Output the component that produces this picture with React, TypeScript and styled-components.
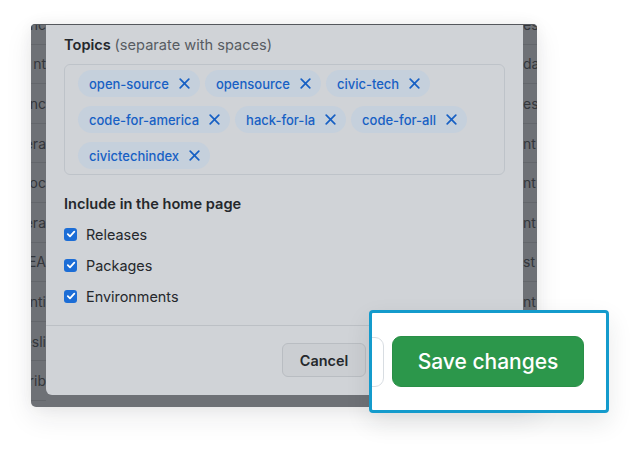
import React from "react";
import styled, { createGlobalStyle } from "styled-components";

const GlobalStyle = createGlobalStyle`
  html, body { margin: 0; padding: 0; background: #ffffff; }
  body { font-family: Inter, "Liberation Sans", Arial, sans-serif; -webkit-font-smoothing: antialiased; }
  * { box-sizing: border-box; }
`;

const Stage = styled.div`
  position: relative;
  width: 640px;
  height: 450px;
  overflow: hidden;
  padding: 24px 0 0 31px;
`;

const Shot = styled.div`
  width: 506px;
  height: 383px;
  display: grid;
  grid-template-columns: 15px 477px 14px;
  align-items: start;
  background: #6e7176;
  border-top: 1px solid #55585d;
  border-radius: 4px 4px 5px 5px;
  overflow: hidden;
  box-shadow: 0 10px 28px rgba(31, 35, 40, 0.09), 0 0 14px rgba(31, 35, 40, 0.05);
`;

const Strip = styled.div`
  display: flex;
  flex-direction: column;
  margin-top: -20px;
  overflow: hidden;
`;

const StripRow = styled.div<{ $side: "left" | "right" }>`
  height: 39.6px;
  flex: none;
  border-bottom: 1px solid #63666b;
  display: flex;
  align-items: center;
  justify-content: ${(p) => (p.$side === "left" ? "flex-end" : "flex-start")};
  white-space: nowrap;
  font-size: 14px;
  color: #33363b;
  overflow: hidden;
`;

const Dialog = styled.div`
  height: 370px;
  background: #d0d3d7;
  border-radius: 0 0 6px 6px;
  display: flex;
  flex-direction: column;
`;

const Body = styled.div`
  padding: 10px 18px 19px;
  display: flex;
  flex-direction: column;
  border-bottom: 1px solid #bcc0c5;
`;

const Label = styled.div`
  font-size: 14.6px;
  line-height: 20px;
  font-weight: 600;
  color: #25282c;
`;

const Hint = styled.span`
  font-weight: 400;
  color: #575c62;
`;

const TopicBox = styled.div`
  margin-top: 9px;
  height: 111px;
  border: 1px solid #bec3c9;
  border-radius: 6px;
  padding: 5px 13px;
  display: flex;
  flex-wrap: wrap;
  align-content: flex-start;
  column-gap: 5px;
  row-gap: 9px;
`;

const Tag = styled.span`
  height: 27px;
  display: inline-flex;
  align-items: center;
  gap: 10px;
  padding: 0 10px 0 11px;
  border-radius: 14px;
  background: #c5d0dc;
  color: #1760c4;
  font-size: 13px;
  font-weight: 500;
`;

const Section = styled(Label)`
  margin-top: 19px;
`;

const Options = styled.div`
  margin-top: 10px;
  display: flex;
  flex-direction: column;
  gap: 11px;
`;

const Option = styled.label`
  display: flex;
  align-items: center;
  gap: 9px;
  height: 20px;
  font-size: 14.4px;
  color: #25282c;
`;

const Box = styled.span`
  width: 13px;
  height: 13px;
  border-radius: 3px;
  background: #1c6dd6;
  display: inline-flex;
  align-items: center;
  justify-content: center;
`;

const Footer = styled.div`
  flex: 1;
  display: flex;
  justify-content: flex-end;
  align-items: flex-start;
  padding: 17px 157px 0 18px;
`;

const Button = styled.button`
  height: 34px;
  width: 84px;
  padding: 0 16px;
  border-radius: 6px;
  font-family: inherit;
  font-size: 14.4px;
  font-weight: 600;
  border: 1px solid #b9bdc2;
  background: #cbced2;
  color: #25282c;
`;

const Highlight = styled.div`
  position: absolute;
  left: 369px;
  top: 310px;
  width: 240px;
  height: 103px;
  border: 3px solid #149bcc;
  border-radius: 4px;
  background: #ffffff;
  overflow: hidden;
  display: flex;
  align-items: center;
  gap: 8px;
  box-shadow: 0 10px 24px rgba(31, 35, 40, 0.1);
`;

const GhostButton = styled.div`
  width: 60px;
  height: 50px;
  margin-left: -48px;
  border: 1px solid #d8dde2;
  border-radius: 9px;
  background: #ffffff;
  flex: none;
`;

const BigSave = styled.button`
  width: 192px;
  height: 51px;
  flex: none;
  border-radius: 9px;
  background: #2c974b;
  border: 1px solid #2a8f47;
  color: #ffffff;
  font-family: inherit;
  font-size: 21px;
  font-weight: 500;
  display: flex;
  align-items: center;
  justify-content: center;
`;

const leftFrag = ["nc", "nt", "inc", "era", "ooc", "era", "EA", "nti", "esli", "rib", ""];
const rightFrag = ["es", "da", "es", "nt", "nt", "nt", "st", "nt", "", "", ""];
const topics = [
  "open-source",
  "opensource",
  "civic-tech",
  "code-for-america",
  "hack-for-la",
  "code-for-all",
  "civictechindex",
];
const options = ["Releases", "Packages", "Environments"];

const XIcon = () => (
  <svg width="11" height="11" viewBox="0 0 11 11" aria-hidden="true">
    <path d="M1.2 1.2 L9.8 9.8 M9.8 1.2 L1.2 9.8" stroke="currentColor" strokeWidth="1.7" strokeLinecap="round" />
  </svg>
);

const Check = () => (
  <svg width="10" height="10" viewBox="0 0 10 10" aria-hidden="true">
    <path d="M1.8 5.2 L4 7.3 L8.3 2.6" stroke="#ffffff" strokeWidth="1.8" fill="none" strokeLinecap="round" strokeLinejoin="round" />
  </svg>
);

export default function App() {
  return (
    <>
      <GlobalStyle />
      <Stage>
        <Shot>
          <Strip>
            {leftFrag.map((t, i) => (
              <StripRow key={i} $side="left">{t}</StripRow>
            ))}
          </Strip>
          <Dialog>
            <Body>
              <Label>
                Topics <Hint>(separate with spaces)</Hint>
              </Label>
              <TopicBox>
                {topics.map((t) => (
                  <Tag key={t}>
                    {t}
                    <XIcon />
                  </Tag>
                ))}
              </TopicBox>
              <Section>Include in the home page</Section>
              <Options>
                {options.map((o) => (
                  <Option key={o}>
                    <Box>
                      <Check />
                    </Box>
                    {o}
                  </Option>
                ))}
              </Options>
            </Body>
            <Footer>
              <Button>Cancel</Button>
            </Footer>
          </Dialog>
          <Strip>
            {rightFrag.map((t, i) => (
              <StripRow key={i} $side="right">{t}</StripRow>
            ))}
          </Strip>
        </Shot>
        <Highlight>
          <GhostButton />
          <BigSave>Save changes</BigSave>
        </Highlight>
      </Stage>
    </>
  );
}
